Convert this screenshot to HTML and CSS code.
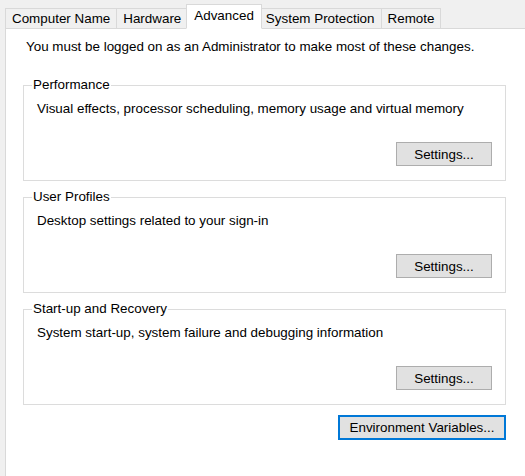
FILE: index.html
```html
<!DOCTYPE html>
<html>
<head>
<meta charset="utf-8">
<link rel="stylesheet" href="styles.css">
</head>
<body>
<div class="dialog">
  <div class="tabs">
    <div class="tab">Computer Name</div>
    <div class="tab">Hardware</div>
    <div class="tab active">Advanced</div>
    <div class="tab">System Protection</div>
    <div class="tab">Remote</div>
  </div>
  <div class="panel">
    <p class="note">You must be logged on as an Administrator to make most of these changes.</p>
    <fieldset class="group">
      <legend>Performance</legend>
      <p class="desc">Visual effects, processor scheduling, memory usage and virtual memory</p>
      <div class="actions"><button class="btn">Settings...</button></div>
    </fieldset>
    <fieldset class="group">
      <legend>User Profiles</legend>
      <p class="desc">Desktop settings related to your sign-in</p>
      <div class="actions"><button class="btn">Settings...</button></div>
    </fieldset>
    <fieldset class="group">
      <legend>Start-up and Recovery</legend>
      <p class="desc">System start-up, system failure and debugging information</p>
      <div class="actions"><button class="btn">Settings...</button></div>
    </fieldset>
    <div class="footer"><button class="btn btn-default">Environment Variables...</button></div>
  </div>
</div>
</body>
</html>
```
FILE: styles.css
```css
html, body {
  margin: 0;
  padding: 0;
  background: #f0f0f0;
  height: 100%;
  overflow: hidden;
}
body {
  font-family: "Liberation Sans", Arial, sans-serif;
  font-size: 13.4px;
  color: #000;
}
.dialog {
  padding: 3px 0 0 5px;
  box-sizing: border-box;
  height: 100%;
  display: flex;
  flex-direction: column;
}
.tabs {
  display: flex;
  align-items: flex-end;
  height: 25px;
  flex: none;
  position: relative;
  z-index: 1;
}
.tab {
  box-sizing: border-box;
  height: 21px;
  line-height: 19px;
  padding: 0 6px;
  border: 1px solid #d9d9d9;
  border-left: none;
  background: #f0f0f0;
  margin-bottom: -1px;
}
.tab:first-child {
  border-left: 1px solid #d9d9d9;
}
.tab.active {
  height: 25px;
  line-height: 21px;
  background: #fff;
  border-left: 1px solid #d9d9d9;
  border-bottom: 1px solid #fff;
  margin-left: -2px;
  margin-right: -2px;
  padding: 0 7px;
  position: relative;
  z-index: 2;
}
.panel {
  flex: 1;
  min-height: 0;
  background: #fff;
  border-left: 1px solid #d9d9d9;
  border-top: 1px solid #d9d9d9;
  padding: 10px 19px 0 17px;
}
.note {
  margin: 0 0 22px 3px;
  line-height: 16px;
}
.group {
  margin: 0 0 8px 0;
  padding: 8px 13px 14px 13px;
  border: 1px solid #dcdcdc;
  height: 104px;
  box-sizing: border-box;
  display: flex;
  flex-direction: column;
}
.group legend {
  padding: 0 1px;
  margin-left: -5px;
  line-height: 16px;
}
.desc {
  margin: 0;
  line-height: 16px;
}
.actions {
  margin-top: auto;
  display: flex;
  justify-content: flex-end;
}
.btn {
  font-family: "Liberation Sans", Arial, sans-serif;
  font-size: 13.4px;
  color: #000;
  background: #e1e1e1;
  border: 1px solid #adadad;
  height: 24px;
  width: 96px;
  padding: 0;
  margin: 0;
}
.footer {
  display: flex;
  justify-content: flex-end;
  margin-top: 10px;
}
.btn-default {
  border: 2px solid #0078d7;
  width: 168px;
  height: 25px;
}
```
